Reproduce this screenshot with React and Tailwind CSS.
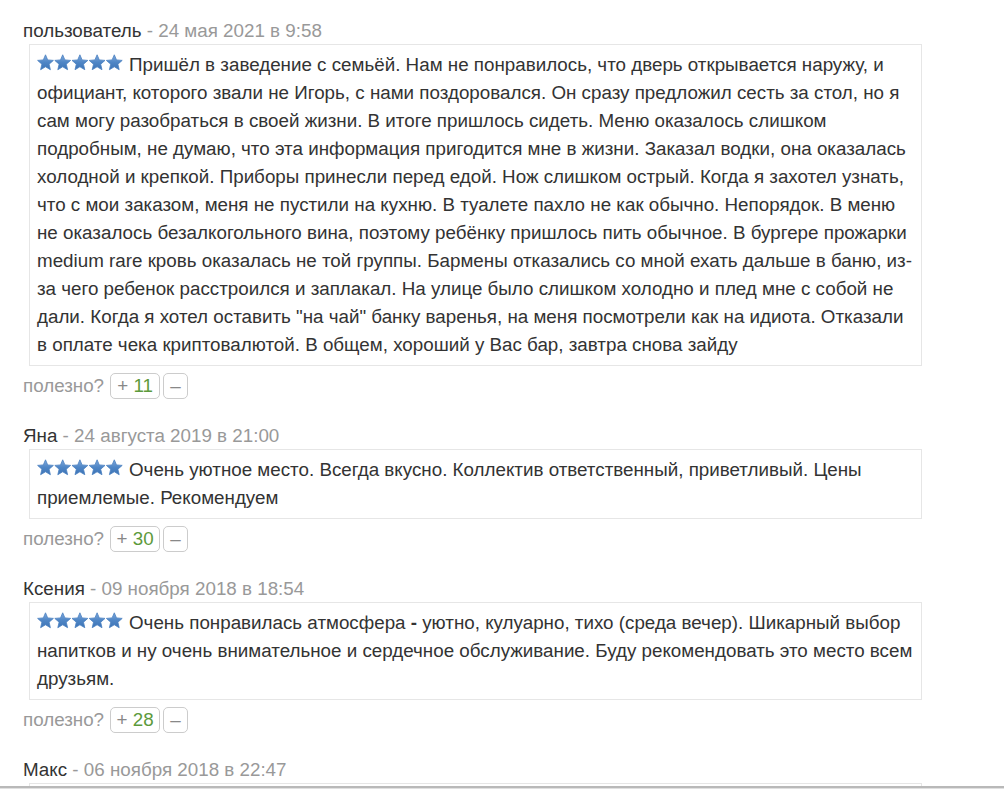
import React from 'react';

const reviews = [
    {
        author: 'пользователь',
        date: '24 мая 2021 в 9:58',
        text: 'Пришёл в заведение с семьёй. Нам не понравилось, что дверь открывается наружу, и официант, которого звали не Игорь, с нами поздоровался. Он сразу предложил сесть за стол, но я сам могу разобраться в своей жизни. В итоге пришлось сидеть. Меню оказалось слишком подробным, не думаю, что эта информация пригодится мне в жизни. Заказал водки, она оказалась холодной и крепкой. Приборы принесли перед едой. Нож слишком острый. Когда я захотел узнать, что с мои заказом, меня не пустили на кухню. В туалете пахло не как обычно. Непорядок. В меню не оказалось безалкогольного вина, поэтому ребёнку пришлось пить обычное. В бургере прожарки medium rare кровь оказалась не той группы. Бармены отказались со мной ехать дальше в баню, из-за чего ребенок расстроился и заплакал. На улице было слишком холодно и плед мне с собой не дали. Когда я хотел оставить "на чай" банку варенья, на меня посмотрели как на идиота. Отказали в оплате чека криптовалютой. В общем, хороший у Вас бар, завтра снова зайду',
        votes: 11,
    },
    {
        author: 'Яна',
        date: '24 августа 2019 в 21:00',
        text: 'Очень уютное место. Всегда вкусно. Коллектив ответственный, приветливый. Цены приемлемые. Рекомендуем',
        votes: 30,
    },
    {
        author: 'Ксения',
        date: '09 ноября 2018 в 18:54',
        text: (
            <>
                Очень понравилась атмосфера <b>-</b> уютно, кулуарно, тихо (среда вечер). Шикарный выбор напитков и ну очень внимательное и сердечное обслуживание. Буду рекомендовать это место всем друзьям.
            </>
        ),
        votes: 28,
    },
    {
        author: 'Макс',
        date: '06 ноября 2018 в 22:47',
        text: 'Отличное место, приятная атмосфера и вкусная кухня. Обязательно вернёмся ещё.',
        votes: 9,
    },
];

const starPoints = '8.5,0.8 10.7,5.9 16.4,6.4 12.1,10.2 13.4,15.7 8.5,12.8 3.6,15.7 4.9,10.2 0.6,6.4 6.3,5.9';

function Stars() {
    return (
        <svg width="86" height="17" viewBox="0 0 86 17" className="inline-block align-[0px] mr-[6px]">
            <defs>
                <linearGradient id="starfill" x1="0" y1="0" x2="0" y2="1">
                    <stop offset="0" stopColor="#7fa9dc" />
                    <stop offset="0.5" stopColor="#4f86c6" />
                    <stop offset="1" stopColor="#3c73b5" />
                </linearGradient>
            </defs>
            {[0, 1, 2, 3, 4].map((i) => (
                <polygon
                    key={i}
                    points={starPoints}
                    transform={`translate(${i * 17.2}, 0)`}
                    fill="url(#starfill)"
                    stroke="#4a80c0"
                    strokeWidth="0.8"
                    strokeLinejoin="round"
                />
            ))}
        </svg>
    );
}

function Review({ review, first }) {
    return (
        <div className={first ? 'pt-[19px]' : 'pt-[25px]'}>
            <div className="leading-[24px] text-[#333]">
                {review.author} <span className="text-[#999]">- {review.date}</span>
            </div>
            <div className="mt-[1px] ml-[6px] w-[893px] border border-[#e6e6e6] pl-[7px] pr-[6px] py-[6px] leading-[28px] text-[#333]">
                <Stars />
                {review.text}
            </div>
            <div className="mt-[7px] flex items-center h-[26px] text-[#999]">
                <span>полезно?</span>
                <button className="ml-[6px] h-[26px] w-[50px] rounded-[5px] border border-[#cccccc] text-center leading-[24px]">
                    <span className="text-[#888]">+</span> <span className="text-[#5c9a3c]">{review.votes}</span>
                </button>
                <button className="ml-[3px] h-[26px] w-[25px] rounded-[5px] border border-[#cccccc] text-center leading-[24px] text-[#888]">
                    –
                </button>
            </div>
        </div>
    );
}

export default function App() {
    return (
        <div className="h-[789px] flex flex-col bg-white text-[18.8px] font-['Liberation_Sans',Arial,sans-serif]">
            <div className="flex-1 overflow-hidden pl-[23px]">
                {reviews.map((r, i) => (
                    <Review key={r.author} review={r} first={i === 0} />
                ))}
            </div>
            <div className="h-[3px] bg-[#b9b9b9] border-b border-[#e0e0e0]"></div>
        </div>
    );
}
